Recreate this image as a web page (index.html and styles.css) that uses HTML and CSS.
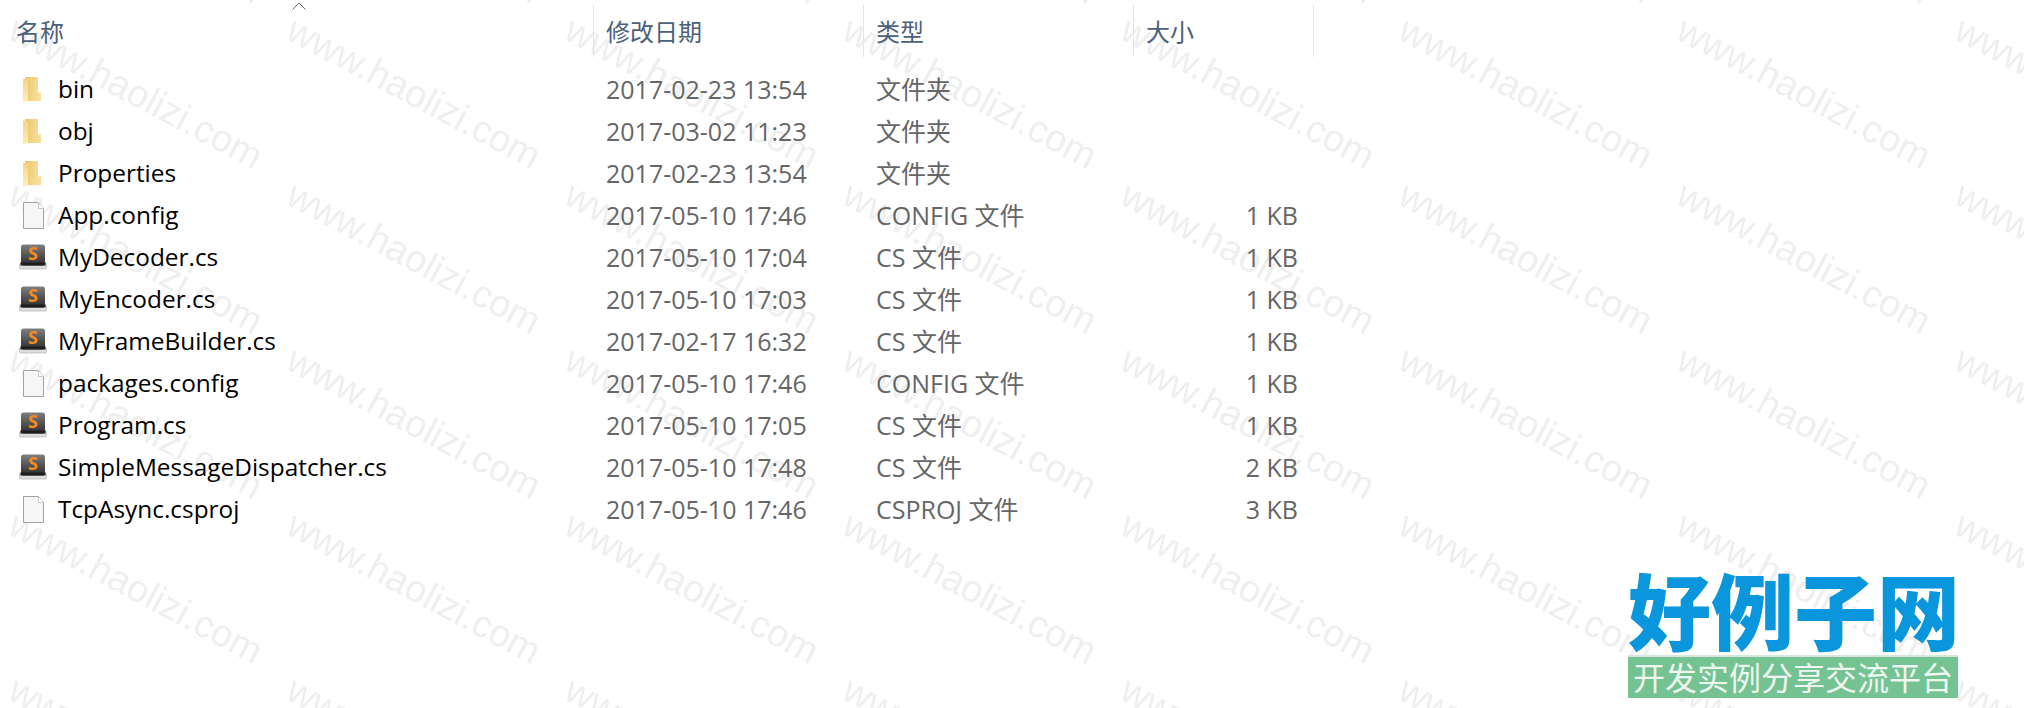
FILE: index.html
```html
<!DOCTYPE html>
<html lang="zh">
<head>
<meta charset="utf-8">
<title>文件列表</title>
<link rel="stylesheet" href="styles.css">
</head>
<body>
<svg class="defs" width="0" height="0" aria-hidden="true">
  <defs>
    <linearGradient id="fg" x1="0" y1="0" x2="1" y2="0.15"><stop offset="0" stop-color="#e9c670"/><stop offset="1" stop-color="#f8e09a"/></linearGradient>
    <linearGradient id="ff" x1="0" y1="0" x2="0" y2="1"><stop offset="0" stop-color="#f4d584"/><stop offset="1" stop-color="#fff0b4"/></linearGradient>
    <linearGradient id="sb" x1="0" y1="0" x2="0" y2="1"><stop offset="0" stop-color="#808080"/><stop offset="0.5" stop-color="#555"/><stop offset="1" stop-color="#2c2c2c"/></linearGradient>
    <symbol id="i-folder" viewBox="0 0 28 28">
      <path d="M6 1h13v15.500h3v8.500H6z" fill="url(#fg)"/>
      <path d="M4 2.500 9 4v20.500L5 27l-1-1z" fill="url(#ff)"/>
    </symbol>
    <symbol id="i-file" viewBox="0 0 28 28">
      <path d="M4.500.5h15l5 6v20h-20z" fill="#f5f6f8" stroke="#a2a2a2"/>
      <path d="M19.500.5v6h5" fill="#fff" stroke="#c8c8c8"/>
    </symbol>
    <symbol id="i-subl" viewBox="0 0 28 28">
      <rect x="0.500" y="19" width="27" height="6" rx="1.500" fill="#dedede" stroke="#a8a8a8" stroke-width="0.600"/>
      <rect x="2" y="0.500" width="24" height="21" rx="2.500" fill="url(#sb)"/>
      <rect x="1.500" y="18.500" width="25" height="3" fill="#1f1f1f"/>
      <text x="14" y="16" class="s-glyph">S</text>
    </symbol>
    <pattern id="wm" width="278" height="165" patternUnits="userSpaceOnUse" patternTransform="translate(0 14)">
      <text x="6" y="24" class="wm-text" transform="rotate(28 6 24)">www.haolizi.com</text>
    </pattern>
  </defs>
</svg>

<svg class="watermark" width="2024" height="708" aria-hidden="true"><rect width="2024" height="708" fill="url(#wm)"/></svg>

<main class="list">
  <div class="sort-caret"><svg width="14" height="8" viewBox="0 0 14 8"><path d="M.5 7.500 7 1l6.500 6.500" fill="none" stroke="#6f6f6f"/></svg></div>
  <div class="head">
    <div class="hcell first">名称</div>
    <div class="hcell">修改日期</div>
    <div class="hcell">类型</div>
    <div class="hcell">大小</div>
  </div>
  <div class="rows">
    <div class="row"><div class="name"><svg class="ico"><use href="#i-folder"/></svg>bin</div><div class="cell">2017-02-23 13:54</div><div class="cell">文件夹</div><div class="cell size"></div></div>
    <div class="row"><div class="name"><svg class="ico"><use href="#i-folder"/></svg>obj</div><div class="cell">2017-03-02 11:23</div><div class="cell">文件夹</div><div class="cell size"></div></div>
    <div class="row"><div class="name"><svg class="ico"><use href="#i-folder"/></svg>Properties</div><div class="cell">2017-02-23 13:54</div><div class="cell">文件夹</div><div class="cell size"></div></div>
    <div class="row"><div class="name"><svg class="ico"><use href="#i-file"/></svg>App.config</div><div class="cell">2017-05-10 17:46</div><div class="cell">CONFIG 文件</div><div class="cell size">1 KB</div></div>
    <div class="row"><div class="name"><svg class="ico"><use href="#i-subl"/></svg>MyDecoder.cs</div><div class="cell">2017-05-10 17:04</div><div class="cell">CS 文件</div><div class="cell size">1 KB</div></div>
    <div class="row"><div class="name"><svg class="ico"><use href="#i-subl"/></svg>MyEncoder.cs</div><div class="cell">2017-05-10 17:03</div><div class="cell">CS 文件</div><div class="cell size">1 KB</div></div>
    <div class="row"><div class="name"><svg class="ico"><use href="#i-subl"/></svg>MyFrameBuilder.cs</div><div class="cell">2017-02-17 16:32</div><div class="cell">CS 文件</div><div class="cell size">1 KB</div></div>
    <div class="row"><div class="name"><svg class="ico"><use href="#i-file"/></svg>packages.config</div><div class="cell">2017-05-10 17:46</div><div class="cell">CONFIG 文件</div><div class="cell size">1 KB</div></div>
    <div class="row"><div class="name"><svg class="ico"><use href="#i-subl"/></svg>Program.cs</div><div class="cell">2017-05-10 17:05</div><div class="cell">CS 文件</div><div class="cell size">1 KB</div></div>
    <div class="row"><div class="name"><svg class="ico"><use href="#i-subl"/></svg>SimpleMessageDispatcher.cs</div><div class="cell">2017-05-10 17:48</div><div class="cell">CS 文件</div><div class="cell size">2 KB</div></div>
    <div class="row"><div class="name"><svg class="ico"><use href="#i-file"/></svg>TcpAsync.csproj</div><div class="cell">2017-05-10 17:46</div><div class="cell">CSPROJ 文件</div><div class="cell size">3 KB</div></div>
  </div>
</main>

<aside class="logo">
  <div class="logo-title">好例子网</div>
  <div class="logo-sub">开发实例分享交流平台</div>
</aside>
</body>
</html>
```
FILE: styles.css
```css
* { box-sizing: border-box; }
html, body { margin: 0; height: 708px; overflow: hidden; background: #fff; }
body { position: relative; font-family: "Open Sans", "Noto Sans CJK SC", sans-serif; }
.defs { position: absolute; }
.watermark { position: absolute; left: 0; top: 0; }
.wm-text { font: 38px "Liberation Sans", sans-serif; fill: #efefef; }
.list { position: relative; width: 1320px; padding-top: 5px; }
.sort-caret { position: absolute; left: 292px; top: 2px; line-height: 0; }
.head { display: grid; grid-template-columns: 594px 270px 270px 180px; height: 52px; }
.hcell { display: flex; align-items: center; padding-left: 12px; border-right: 1px solid #e5e5e5; color: #4c607a; font-size: 24px; font-family: "Noto Sans CJK SC", sans-serif; padding-bottom: 2px; }
.hcell.first { padding-left: 16px; }
.rows { padding-top: 12px; }
.row { display: grid; grid-template-columns: 594px 270px 270px 170px; height: 42px; align-items: center; font-size: 25px; }
.name { display: flex; align-items: center; gap: 11px; padding-left: 19px; color: #000; font-size: 24.4px; line-height: 40px; padding-bottom: 2px; }
.ico { width: 28px; height: 28px; flex: none; margin-top: 2px; }
.cell { padding-left: 12px; color: #666; white-space: nowrap; line-height: 40px; padding-bottom: 2px; }
.cell.size { padding: 0 6px 2px 0; text-align: right; }
.s-glyph { font: 700 18px "Open Sans", sans-serif; fill: #f58a1f; text-anchor: middle; }
.logo { position: absolute; left: 1628px; top: 566px; width: 330px; }
.logo-title { height: 89px; color: #0a96dc; font: 900 83px/84px "Noto Sans CJK SC", serif; white-space: nowrap; }
.logo-sub { height: 43px; background: #75c393; border-top: 2px solid #d6e6da; color: #eef6f0; font: 32px/39px "Noto Sans CJK SC", sans-serif; white-space: nowrap; text-align: center; }
```
